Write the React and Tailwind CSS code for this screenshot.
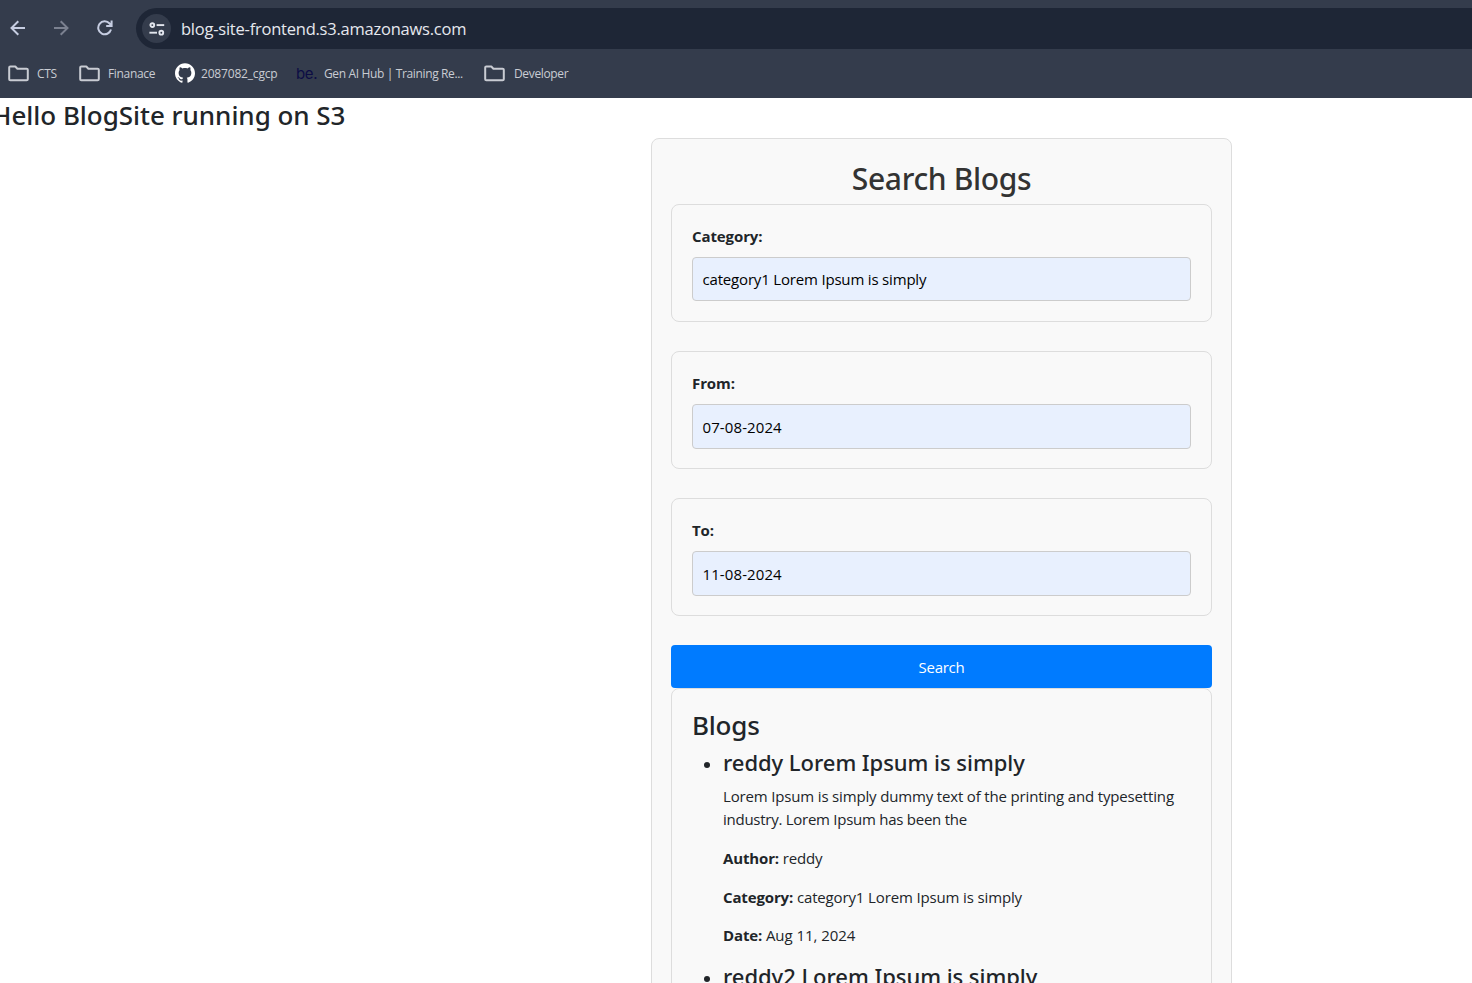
import React from "react";
import { SiGithub } from "react-icons/si";

function FolderIcon() {
  return (
    <svg width="21" height="17" viewBox="0 0 21 17" fill="none" stroke="#c9ccd3" strokeWidth="2" strokeLinejoin="round" className="shrink-0">
      <path d="M1.2 2.6Q1.2 1.5 2.3 1.5H7.3L9.4 3.7H18.6Q19.8 3.7 19.8 4.8V14.2Q19.8 15.3 18.6 15.3H2.3Q1.2 15.3 1.2 14.2Z" />
    </svg>
  );
}

function SiteSettingsIcon() {
  return (
    <svg width="16" height="14" viewBox="0 0 16 14" fill="none" stroke="#e3e6ee" strokeWidth="1.9">
      <circle cx="3.3" cy="3.1" r="1.9" />
      <path d="M7.6 3.1H15.2" />
      <circle cx="12.3" cy="10.7" r="1.9" />
      <path d="M0.4 10.7H8" />
    </svg>
  );
}

function Bookmark({ icon, label, className }) {
  return (
    <div className={`flex items-center ${className}`}>
      {icon}
      <span>{label}</span>
    </div>
  );
}

function BrowserChrome() {
  return (
    <header className="h-[98px] bg-[#343c4c] font-['Open_Sans',sans-serif]">
      <div className="flex h-[49px] items-end">
        <div className="flex h-[41px] w-[136px] shrink-0 items-center pb-px pl-[10px]">
          <svg width="16" height="16" viewBox="0 0 16 16" fill="none" stroke="#c6cde1" strokeWidth="2">
            <path d="M15 8H2M8.3 1.2L1.5 8L8.3 14.8" />
          </svg>
          <svg width="16" height="16" viewBox="0 0 16 16" fill="none" stroke="#7b8190" strokeWidth="2" className="ml-[27px]">
            <path d="M1 8H14M7.7 1.2L14.5 8L7.7 14.8" />
          </svg>
          <svg width="16" height="16" viewBox="0 0 16 16" fill="none" stroke="#c6cde1" strokeWidth="2" className="ml-[28px]">
            <path d="M14 9.6A6.5 6.5 0 1 1 12.6 3.5L14.4 5.6M14.6 0.6V6H9.2" />
          </svg>
        </div>
        <div className="flex h-[41px] grow items-center rounded-l-full bg-[#1e2636] pl-[6px]">
          <div className="flex size-[29px] items-center justify-center rounded-full bg-[#343c4c]">
            <SiteSettingsIcon />
          </div>
          <span className="mt-[2px] ml-[10px] text-[16.5px] tracking-[-0.23px] text-[#e6e8ee]">blog-site-frontend.s3.amazonaws.com</span>
        </div>
      </div>
      <nav className="flex h-[49px] items-center text-[12px] text-[#c9ccd3]">
        <Bookmark icon={<FolderIcon />} label="CTS" className="w-[71px] gap-2 pl-2 tracking-[-0.3px]" />
        <Bookmark icon={<FolderIcon />} label="Finanace" className="w-[96px] gap-2 pl-2 tracking-[-0.33px]" />
        <Bookmark icon={<SiGithub size={20} color="#fff" className="mb-[2px]" />} label="2087082_cgcp" className="w-[129px] gap-[6px] pl-2 tracking-[-0.18px]" />
        <Bookmark
          icon={<span className="w-[28px] pt-px font-['Inter',sans-serif] text-[15px] text-[#0c0c44]">be.</span>}
          label="Gen AI Hub | Training Re..."
          className="w-[180px] tracking-[-0.36px]"
        />
        <Bookmark icon={<FolderIcon />} label="Developer" className="gap-[9px] pl-2 tracking-[-0.35px]" />
      </nav>
    </header>
  );
}

function Field({ label, value, valueClass }) {
  return (
    <div className="mb-[29px] h-[118px] rounded-lg border border-[#dddddd] px-5 pt-[19px]">
      <label className="block h-[33px] text-[15px] leading-[24px] font-bold tracking-[-0.1px]">{label}</label>
      <div className={`flex items-center rounded-[4px] border border-[#cccccc] bg-[#e8f0fe] px-[9.5px] text-black ${valueClass}`}>
        {value}
      </div>
    </div>
  );
}

function Detail({ label, value, valueClass }) {
  return (
    <p className="mb-[15.6px] leading-[23px]">
      <b>{label}</b> <span className={valueClass}>{value}</span>
    </p>
  );
}

export default function App() {
  return (
    <div className="h-[983px] w-[1472px] overflow-hidden bg-white text-[#212529]">
      <BrowserChrome />
      <h3 className="ml-[-8px] h-[40px] pt-px font-['Noto_Sans',sans-serif] text-[26px] leading-[32px] font-medium tracking-[-0.03px] whitespace-nowrap">
        Hello BlogSite running on S3
      </h3>
      <main className="ml-[651px] h-[1200px] w-[581px] rounded-lg border border-[#dddddd] bg-[#f9f9f9] px-[19px] pt-[19px] font-['Open_Sans',sans-serif] text-[15px]">
        <h2 className="h-[46px] text-center font-['Noto_Sans',sans-serif] text-[30px] leading-[42px] font-medium tracking-[-0.35px] text-[#333333]">
          Search Blogs
        </h2>
        <Field label="Category:" value="category1 Lorem Ipsum is simply" valueClass="h-[44px] pt-px tracking-[-0.18px]" />
        <Field label="From:" value="07-08-2024" valueClass="h-[45px] pt-[2px] tracking-[0.1px]" />
        <Field label="To:" value="11-08-2024" valueClass="h-[45px] pt-[2px] tracking-[0.1px]" />
        <button className="block h-[43px] w-full rounded-[4px] bg-[#007bff] pt-[2px] text-center tracking-[-0.25px] text-white">Search</button>
        <section className="h-[600px] rounded-lg border border-[#dddddd] px-5 pt-5">
          <h3 className="h-[40px] font-['Noto_Sans',sans-serif] text-[26px] leading-[32px] font-medium tracking-[-0.2px]">Blogs</h3>
          <ul className="list-disc pl-[31px] tracking-[-0.14px] marker:text-[17px]">
            <li>
              <h4 className="mb-[9px] font-['Noto_Sans',sans-serif] text-[22px] leading-[27px] font-medium tracking-[-0.04px]">
                reddy Lorem Ipsum is simply
              </h4>
              <p className="mb-[16px] leading-[23px]">
                <span className="tracking-[-0.16px]">Lorem Ipsum is simply dummy text of the printing and typesetting</span>
                <br />
                <span className="tracking-[-0.26px]">industry. Lorem Ipsum has been the</span>
              </p>
              <Detail label="Author:" value="reddy" />
              <Detail label="Category:" value="category1 Lorem Ipsum is simply" />
              <Detail label="Date:" value="Aug 11, 2024" valueClass="tracking-[-0.05px]" />
            </li>
            <li>
              <h4 className="font-['Noto_Sans',sans-serif] text-[22px] leading-[27px] font-medium tracking-[-0.04px]">
                reddy2 Lorem Ipsum is simply
              </h4>
            </li>
          </ul>
        </section>
      </main>
    </div>
  );
}
